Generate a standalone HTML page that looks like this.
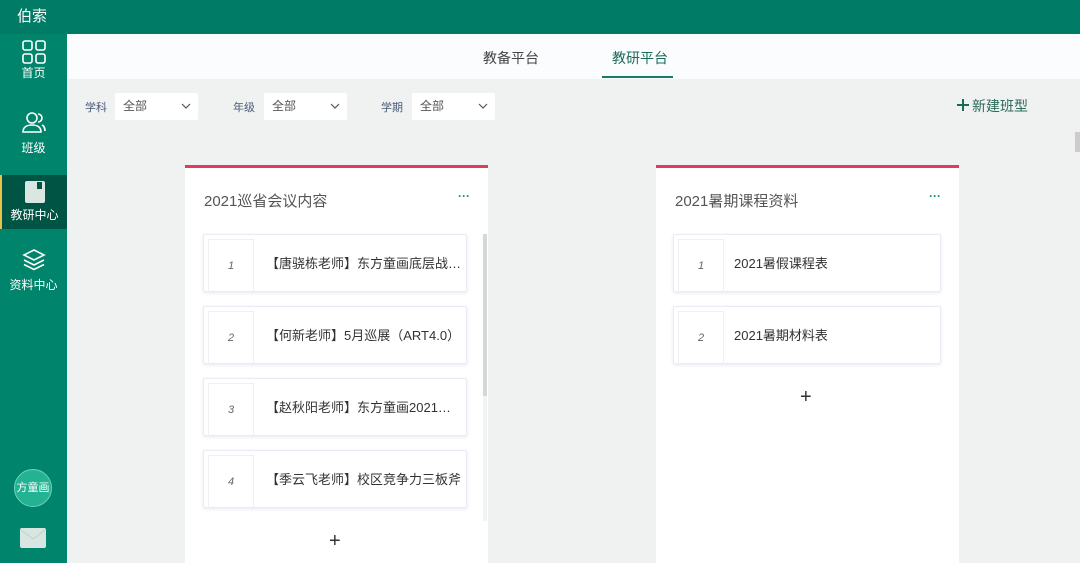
<!DOCTYPE html>
<html><head><meta charset="utf-8"><style>
*{margin:0;padding:0;box-sizing:border-box}
body{width:1080px;height:563px;overflow:hidden;background:#f0f1f1;font-family:"Liberation Sans","Noto Sans CJK SC",sans-serif;position:relative}
.top{position:absolute;left:0;top:0;width:1080px;height:34px;background:#007b65;color:#fff;font-size:15px;line-height:34px;padding-left:17px}
.side{position:absolute;left:0;top:34px;width:67px;height:529px;background:#00846b}
.nav{position:absolute;left:0;width:67px;text-align:center;color:#fff;font-size:12px}
.tabs{position:absolute;left:67px;top:34px;width:1013px;height:45px;background:#fafcfd}
.tab{position:absolute;top:14px;font-size:14px;color:#444}
.lbl{position:absolute;top:99px;font-size:11px;color:#4a5a7a}
.sel{position:absolute;top:93px;width:83px;height:27px;background:#fff;border-radius:2px;font-size:12px;color:#555;line-height:27px;padding-left:8px}
.sel svg{position:absolute;right:7px;top:10px}
.card{position:absolute;top:165px;width:303px;height:398px;background:#fff;border-top:3px solid #e23a5d}
.ttl{position:absolute;left:19px;top:22px;font-size:15px;color:#555}
.dots{position:absolute;right:10px;top:19px;width:28px;height:26px;color:#1a8a70;font-size:12px;text-align:center;line-height:18px;font-weight:bold}
.it{position:absolute;height:58px;background:#fff;border:1px solid #eaecf3;box-shadow:0 1px 3px rgba(150,160,200,.25);border-radius:2px}
.num{position:absolute;left:4px;top:4px;width:46px;height:54px;border:1px solid #eef0f5;border-bottom:none;font-size:11px;font-style:italic;color:#666;text-align:center;line-height:52px}
.tx{position:absolute;left:62px;top:0;width:200px;overflow:hidden;line-height:57px;font-size:13px;color:#333;white-space:nowrap}
.plus{position:absolute;font-size:20px;color:#333}
</style></head><body>
<div class="top">伯索</div>
<div class="side">
 <div class="nav" style="top:6px"><svg width="24" height="24" viewBox="0 0 24 24" fill="none" stroke="#fff" stroke-width="1.6"><rect x="1" y="1" width="9" height="9" rx="2"/><rect x="14" y="1" width="9" height="9" rx="2"/><rect x="1" y="14" width="9" height="9" rx="2"/><rect x="14" y="14" width="9" height="9" rx="2"/></svg><div style="margin-top:-3px">首页</div></div>
 <div class="nav" style="top:78px"><svg width="24" height="22" viewBox="0 0 24 22" fill="none" stroke="#fff" stroke-width="1.6"><circle cx="10" cy="6" r="5"/><path d="M1 20c0-5 4-7 9-7s9 2 9 7z"/><path d="M16 2a4 4 0 0 1 0 8M20 13c2 1 3 3 3 6"/></svg><div style="margin-top:2px">班级</div></div>
 <div class="nav" style="top:141px;height:54px;background:#005443;border-left:2px solid #e8c34a"><svg style="margin-top:6px" width="20" height="22" viewBox="0 0 20 22"><rect x="0" y="0" width="20" height="22" rx="2" fill="#d9e6e2"/><rect x="12" y="1" width="5" height="7" fill="#005443"/></svg><div style="margin-top:0">教研中心</div></div>
 <div class="nav" style="top:214px"><svg width="24" height="24" viewBox="0 0 24 24" fill="none" stroke="#fff" stroke-width="1.6"><path d="M12 2l10 5-10 5-10-5z"/><path d="M2 12l10 5 10-5"/><path d="M2 16.5l10 5 10-5"/></svg><div style="margin-top:1px">资料中心</div></div>
 <div style="position:absolute;left:14px;top:435px;width:38px;height:38px;border-radius:50%;background:#23b392;border:1px solid #6fd2bb;color:#fff;font-size:11px;line-height:36px;text-align:center">方童画</div>
 <svg style="position:absolute;left:20px;top:494px" width="26" height="20" viewBox="0 0 26 20"><rect width="26" height="20" rx="2" fill="#d8e6e2"/><path d="M1 2l12 9 12-9" fill="none" stroke="#c3d4cf" stroke-width="1.2"/></svg>
</div>
<div class="tabs">
 <div class="tab" style="left:416px">教备平台</div>
 <div class="tab" style="left:545px;color:#1a6b5b">教研平台</div>
 <div style="position:absolute;left:535px;top:42px;width:71px;height:2px;background:#1a7a65"></div>
</div>
<div class="lbl" style="left:85px">学科</div>
<div class="sel" style="left:115px">全部<svg width="10" height="6"><path d="M1 1l4 4 4-4" fill="none" stroke="#555" stroke-width="1.2"/></svg></div>
<div class="lbl" style="left:233px">年级</div>
<div class="sel" style="left:264px">全部<svg width="10" height="6"><path d="M1 1l4 4 4-4" fill="none" stroke="#555" stroke-width="1.2"/></svg></div>
<div class="lbl" style="left:381px">学期</div>
<div class="sel" style="left:412px">全部<svg width="10" height="6"><path d="M1 1l4 4 4-4" fill="none" stroke="#555" stroke-width="1.2"/></svg></div>
<div style="position:absolute;left:956px;top:96px;font-size:14px;color:#2a6a5a"><svg width="14" height="14" style="vertical-align:-1px;margin-right:2px"><path d="M7 1v12M1 7h12" stroke="#1a6b55" stroke-width="2"/></svg>新建班型</div>
<div style="position:absolute;left:1075px;top:132px;width:5px;height:20px;background:#ccc"></div>

<div class="card" style="left:185px">
 <div class="ttl">2021巡省会议内容</div><div class="dots">···</div>
 <div style="position:absolute;left:298px;top:66px;width:4px;height:287px;background:#f3f3f3"></div>
 <div style="position:absolute;left:298px;top:66px;width:4px;height:162px;background:#d6d6d6"></div>
 <div class="it" style="left:18px;top:66px;width:264px"><div class="num">1</div><div class="tx">【唐骁栋老师】东方童画底层战…</div></div>
 <div class="it" style="left:18px;top:138px;width:264px"><div class="num">2</div><div class="tx">【何新老师】5月巡展（ART4.0）</div></div>
 <div class="it" style="left:18px;top:210px;width:264px"><div class="num">3</div><div class="tx">【赵秋阳老师】东方童画2021…</div></div>
 <div class="it" style="left:18px;top:282px;width:264px"><div class="num">4</div><div class="tx">【季云飞老师】校区竞争力三板斧</div></div>
 <div class="plus" style="left:144px;top:362px">+</div>
</div>
<div class="card" style="left:656px">
 <div class="ttl">2021暑期课程资料</div><div class="dots">···</div>
 <div class="it" style="left:17px;top:66px;width:268px"><div class="num">1</div><div class="tx" style="left:60px">2021暑假课程表</div></div>
 <div class="it" style="left:17px;top:138px;width:268px"><div class="num">2</div><div class="tx" style="left:60px">2021暑期材料表</div></div>
 <div class="plus" style="left:144px;top:218px">+</div>
</div>
</body></html>
